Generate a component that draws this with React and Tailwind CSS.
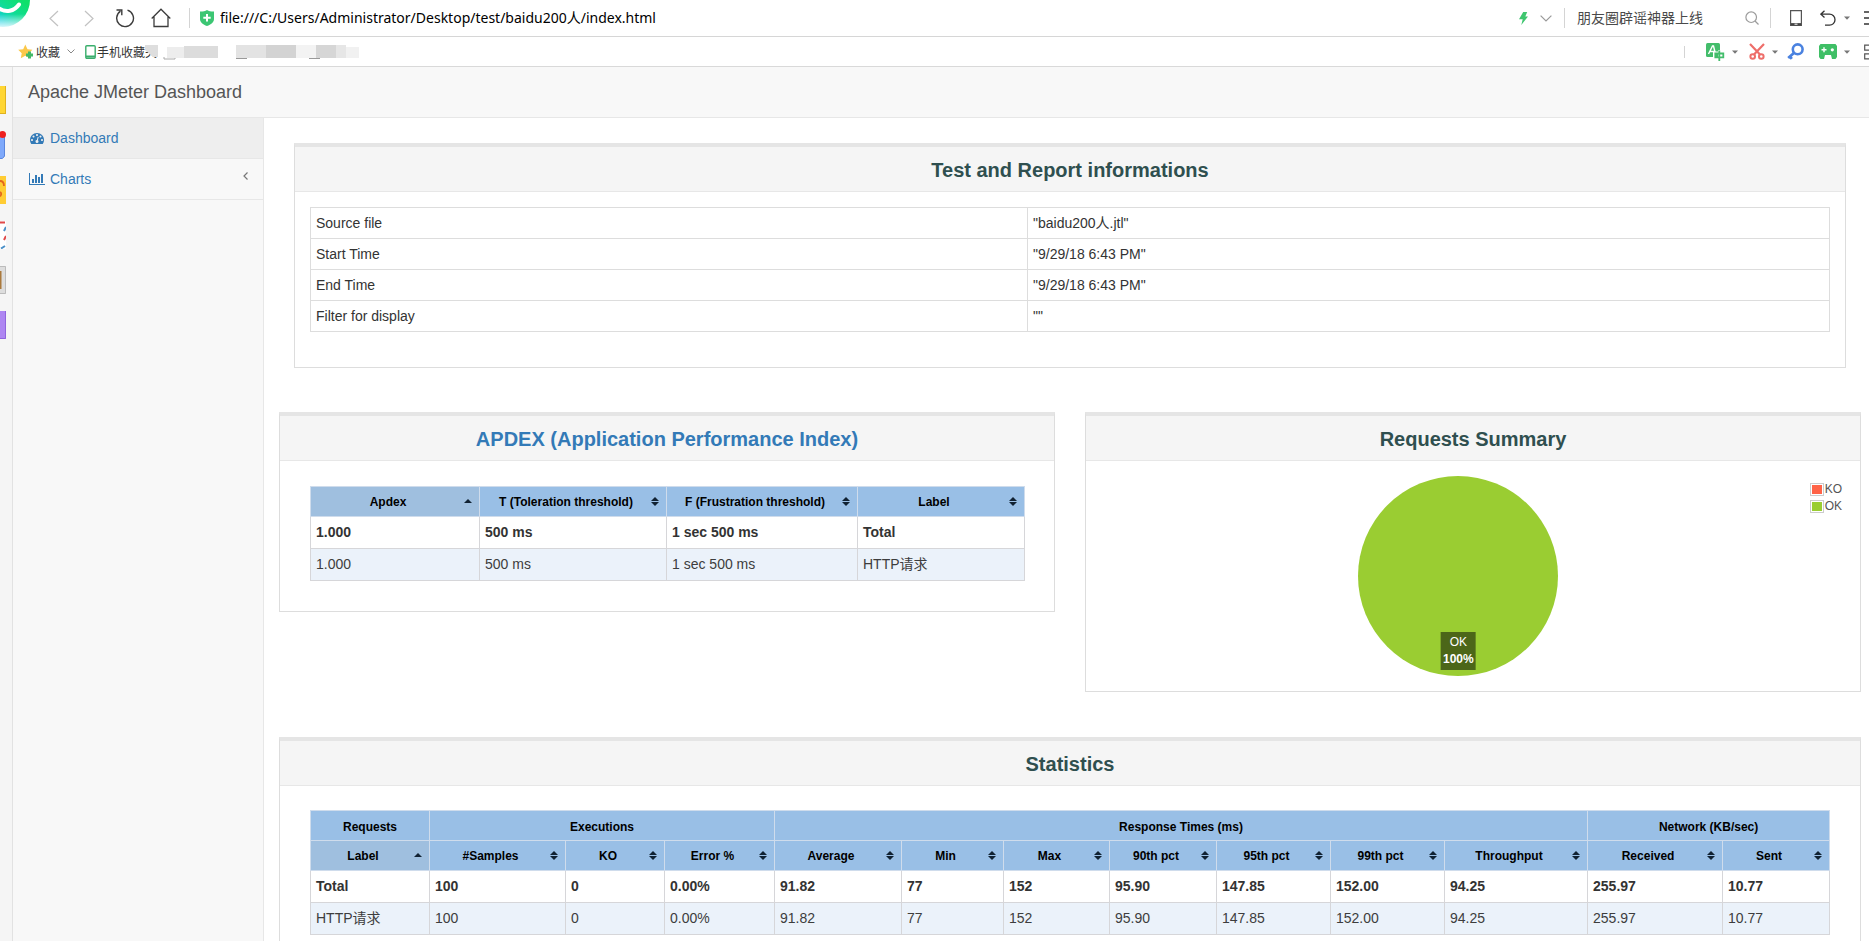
import React from "react";

const Svg = ({ className, viewBox, children }) => (
  <svg className={`block shrink-0 ${className}`} viewBox={viewBox} fill="none" aria-hidden="true">
    {children}
  </svg>
);

const Caret = ({ className = "" }) => (
  <Svg className={`h-[4px] w-[6px] ${className}`} viewBox="0 0 6 4">
    <path d="M0 .5h6L3 3.8z" fill="#777" />
  </Svg>
);

const Divider = ({ className = "" }) => <span className={`w-px shrink-0 bg-[#d4d4d4] ${className}`} />;

const IconButton = ({ label, className = "", children }) => (
  <button type="button" aria-label={label} className={`shrink-0 ${className}`}>
    {children}
  </button>
);

function AddressBar() {
  return (
    <div className="flex h-[37px] items-center overflow-hidden border-b border-[#d6d6d6] bg-white">
      <Svg className="h-[36px] w-[31px]" viewBox="0 0 31 36">
        <defs>
          <linearGradient id="logo" x1="0.5" y1="0.95" x2="0.85" y2="0.5">
            <stop offset="0" stopColor="#10cfe0" />
            <stop offset="0.5" stopColor="#10dc96" />
            <stop offset="1" stopColor="#0fe06a" />
          </linearGradient>
          <linearGradient id="fade" x1="0" y1="0" x2="0" y2="1">
            <stop offset="0" stopColor="#fff" stopOpacity="0" />
            <stop offset="1" stopColor="#fff" stopOpacity="0.9" />
          </linearGradient>
        </defs>
        <circle cx="3" cy="0" r="27" fill="url(#logo)" />
        <path d="M0 14h31v14H0z" fill="url(#fade)" />
        <path d="M-1 8.500c7 4.500 15 3 20-4" stroke="#fff" strokeWidth="4" strokeLinecap="round" />
      </Svg>
      <IconButton label="Back" className="ml-[18px]">
        <Svg className="h-[17px] w-[10px]" viewBox="0 0 10 17">
          <path d="M9 1 1 8.500l8 7.500" stroke="#c2c2c2" strokeWidth="1.200" />
        </Svg>
      </IconButton>
      <IconButton label="Forward" className="ml-[25px]">
        <Svg className="h-[17px] w-[10px]" viewBox="0 0 10 17">
          <path d="m1 1 8 7.500-8 7.500" stroke="#c2c2c2" strokeWidth="1.200" />
        </Svg>
      </IconButton>
      <IconButton label="Reload" className="ml-[21px]">
        <Svg className="h-[20px] w-[20px]" viewBox="0 0 20 20">
          <path d="M12.500 2.200A8.400 8.400 0 1 1 5.500 3.200M1.500 2h5.300v5.300" stroke="#3c3c3c" strokeWidth="1.400" />
        </Svg>
      </IconButton>
      <IconButton label="Home" className="ml-4">
        <Svg className="h-[20px] w-[20px]" viewBox="0 0 20 20">
          <path d="M.7 10.500 10 1.200l9.300 9.300M3 8.500v10h14v-10" stroke="#3c3c3c" strokeWidth="1.300" />
        </Svg>
      </IconButton>
      <Divider className="ml-[18px] h-5" />
      <Svg className="ml-[10px] h-[16px] w-[14px]" viewBox="0 0 14 16">
        <path d="M7 0c2 1.300 4.500 1.600 7 1.500V9c0 3.500-3 5.500-7 7-4-1.500-7-3.500-7-7V1.500C2.500 1.600 5 1.300 7 0z" fill="#3cc673" />
        <path d="M7 4v7.500M3.300 7.700h7.400" stroke="#fff" strokeWidth="2" />
      </Svg>
      <input
        aria-label="Address"
        className="ml-[6px] h-8 min-w-0 flex-1 bg-transparent pb-[2px] font-['Noto_Sans','Noto_Sans_CJK_SC',sans-serif] text-[14px] text-black outline-none"
        defaultValue="file:///C:/Users/Administrator/Desktop/test/baidu200人/index.html"
      />
      <IconButton label="Quick mode">
        <Svg className="h-[13px] w-[9px]" viewBox="0 0 9 13">
          <path d="M4.200 0h4L6.300 4.600H9L2.300 13l1.400-5.800H0z" fill="#3fc66f" />
        </Svg>
      </IconButton>
      <IconButton label="Address history" className="ml-3">
        <Svg className="h-[7px] w-[12px]" viewBox="0 0 12 7">
          <path d="m.6.6 5.400 5.400L11.400.6" stroke="#9a9a9a" strokeWidth="1.200" />
        </Svg>
      </IconButton>
      <Divider className="ml-3 h-5" />
      <input
        aria-label="Search"
        className="ml-3 h-8 w-[168px] shrink-0 bg-transparent pb-[2px] font-['Noto_Sans_CJK_SC',sans-serif] text-[14px] text-[#4a4a4a] outline-none"
        defaultValue="朋友圈辟谣神器上线"
      />
      <IconButton label="Search">
        <Svg className="h-[14px] w-[14px]" viewBox="0 0 14 14">
          <circle cx="6.200" cy="6.200" r="5.300" stroke="#9c9c9c" strokeWidth="1.200" />
          <path d="m10 10 3.500 3.500" stroke="#9c9c9c" strokeWidth="1.200" />
        </Svg>
      </IconButton>
      <Divider className="ml-[11px] h-5" />
      <IconButton label="Mobile view" className="ml-[19px]">
        <Svg className="h-[16px] w-[12px]" viewBox="0 0 12 16">
          <path d="M.6.6h10.800v14.800H.6z" stroke="#555" strokeWidth="1.200" />
          <path d="M1 14.200h10" stroke="#444" strokeWidth="2.200" />
          <path d="M4.500 14.200h3" stroke="#fff" />
        </Svg>
      </IconButton>
      <IconButton label="Undo close" className="ml-[18px]">
        <Svg className="h-[17px] w-[16px]" viewBox="0 0 16 17">
          <path d="M4.500.8.800 4.200l3.700 3.400M1 4.200h8.500a5.500 5.500 0 0 1 0 11H5" stroke="#333" strokeWidth="1.300" />
        </Svg>
      </IconButton>
      <Caret className="ml-2" />
      <IconButton label="Menu" className="-mr-[11px] ml-[14px]">
        <Svg className="h-[14px] w-[16px]" viewBox="0 0 16 14">
          <path d="M0 1h16M0 7h16M0 13h16" stroke="#333" strokeWidth="1.300" />
        </Svg>
      </IconButton>
    </div>
  );
}

function BookmarkBar() {
  return (
    <div className="flex h-[30px] items-center overflow-hidden border-b border-[#d9d9d9] bg-white pl-[18px] font-['Noto_Sans_CJK_SC',sans-serif] text-[12px] text-[#333]">
      <button type="button" className="flex items-center">
        <Svg className="h-[15px] w-[16px]" viewBox="0 0 16 15">
          <path d="m7.300.5 2.200 4.700 4.900.6-3.600 3.500.9 5-4.400-2.500-4.500 2.500.9-5L.2 5.800l5-.6z" fill="#fbc84a" />
          <path d="M11.500 7.500v7M8 11h7" stroke="#43b968" strokeWidth="3" />
        </Svg>
        <span className="ml-[2px]">收藏</span>
        <Svg className="ml-[7px] h-[5px] w-[8px]" viewBox="0 0 8 5">
          <path d="m.5.5 3.500 3.500L7.500.5" stroke="#888" />
        </Svg>
      </button>
      <button type="button" className="ml-[10px] flex items-center">
        <Svg className="h-[14px] w-[11px]" viewBox="0 0 11 14">
          <rect x=".8" y=".8" width="9.400" height="12.400" rx="1" stroke="#3aae6c" strokeWidth="1.400" />
          <path d="M1 11.500h9" stroke="#3aae6c" strokeWidth="2" />
        </Svg>
        <span className="ml-px">手机收藏夹</span>
      </button>
      <Svg className="-ml-[12px] h-[16px] w-[214px]" viewBox="0 0 214 16">
        <path d="M0 1h13v12H8L0 6z" fill="#dedede" />
        <path d="M19 13v2h11v-2" stroke="#aaa" />
        <path d="M22 3h17v11H22z" fill="#ededed" />
        <path d="M39 2h34v12H39z" fill="#dcdcdc" />
        <path d="M91 1h30v13H91z" fill="#e3e3e3" />
        <path d="M91 14.500h11" stroke="#999" />
        <path d="M121 1h30v13h-30z" fill="#d3d3d3" />
        <path d="M151 1h20v13h-20z" fill="#f3f3f3" />
        <path d="M171 1h20v13h-20z" fill="#d6d6d6" />
        <path d="M164 14.500h11" stroke="#999" />
        <path d="M191 1h10v13h-10z" fill="#e6e6e6" />
        <path d="M201 3h13v11h-13z" fill="#f1f1f1" />
      </Svg>
      <Divider className="mr-[21px] ml-auto h-3" />
      <IconButton label="Translate">
        <Svg className="h-[18px] w-[19px]" viewBox="0 0 19 18">
          <rect width="14" height="14" rx="1.500" fill="#43bd6b" />
          <path d="M2.500 11 6.500 3h1l2 8M4 8.500h5" stroke="#fff" strokeWidth="1.400" />
          <path d="M8 9.500h10.500v6.300H8zM13.200 7v11" stroke="#fff" strokeWidth="2" />
          <path d="M9.300 10.500h8v3.800h-8zM13.300 7.500V18" stroke="#43bd6b" strokeWidth="1.800" />
        </Svg>
      </IconButton>
      <Caret className="ml-[7px]" />
      <IconButton label="Screenshot" className="ml-[11px]">
        <Svg className="h-[17px] w-[16px]" viewBox="0 0 16 17">
          <path d="m1 1 10 10.500M15 1 5 11.500" stroke="#ee6e6a" strokeWidth="2.200" />
          <circle cx="3.700" cy="13.500" r="2.300" stroke="#ee6e6a" strokeWidth="2" />
          <circle cx="12.300" cy="13.500" r="2.300" stroke="#ee6e6a" strokeWidth="2" />
        </Svg>
      </IconButton>
      <Caret className="ml-[7px]" />
      <IconButton label="Find" className="ml-[9px]">
        <Svg className="h-[17px] w-[17px]" viewBox="0 0 17 17">
          <circle cx="10.700" cy="6.300" r="4.900" stroke="#4a82e0" strokeWidth="2.600" />
          <path d="m7.200 9.800-6 5.200M3 13.500l1.800 2.300" stroke="#4a82e0" strokeWidth="2.800" />
        </Svg>
      </IconButton>
      <IconButton label="Games" className="ml-[15px]">
        <Svg className="h-[15px] w-[18px]" viewBox="0 0 18 15">
          <path d="M1.500 0h15L18 2v11l-1.500 2H13l-1-4H6l-1 4H1.500L0 13V2z" fill="#3fbf66" />
          <path d="M5 3.300v5M2.500 5.800h5" stroke="#fff" strokeWidth="1.400" />
          <circle cx="13.300" cy="5.800" r="1.600" fill="#fff" />
        </Svg>
      </IconButton>
      <Caret className="ml-[7px]" />
      <IconButton label="All apps" className="-mr-[9px] ml-[14px]">
        <Svg className="h-[16px] w-[14px]" viewBox="0 0 14 16">
          <path d="M.7 1.200h5v5h-5zM.7 9.800h5v5h-5zM8.700 1.200h5v5h-5zM8.700 9.800h5v5h-5z" stroke="#555" strokeWidth="1.200" />
        </Svg>
      </IconButton>
    </div>
  );
}

function Rail() {
  return (
    <div className="flex w-[13px] shrink-0 flex-col gap-[17px] border-r border-[#e2e2e2] bg-[#f5f5f5] pt-[19px]">
      <Svg className="h-7 w-[6px]" viewBox="0 0 6 28">
        <path d="M0 0h6v28H0z" fill="#ffd633" />
        <path d="M5.500 0v28M0 27.500h6" stroke="#e0b21e" />
      </Svg>
      <Svg className="h-7 w-[6px]" viewBox="0 0 6 28">
        <path d="M0 3h5v22l-2 2H0z" fill="#7fa9fb" />
        <path d="M4.500 6v19l-2 2.500H0" stroke="#5b86dd" />
        <circle cx="2.500" cy="3.500" r="3.500" fill="#ee2020" />
      </Svg>
      <Svg className="h-7 w-[6px]" viewBox="0 0 6 28">
        <path d="M0 0h6v28H0z" fill="#ffcc33" />
        <path d="M0 5c3 0 4 2 4 5M0 16c2 1 1 4 0 4" stroke="#e3661c" strokeWidth="1.800" />
      </Svg>
      <Svg className="h-7 w-[6px]" viewBox="0 0 6 28">
        <path d="M0 0h6v28H0z" fill="#fff" />
        <path d="M0 1.500h5M6 15l-2 4" stroke="#e04848" strokeWidth="2" />
        <path d="m6 6-2 4M5 25l-4 2.500" stroke="#4a90c8" strokeWidth="2" />
      </Svg>
      <Svg className="h-7 w-[6px]" viewBox="0 0 6 28">
        <path d="M0 0h6v28H0z" fill="#ddd" />
        <path d="M0 5h1.500v18H0z" fill="#a9793c" />
        <path d="M0 .5h5.500v27H0" stroke="#bbb" />
      </Svg>
      <Svg className="h-7 w-[6px]" viewBox="0 0 6 28">
        <path d="M0 0h6v28H0z" fill="#ae86f2" />
        <path d="M5.500 0v27.500H0" stroke="#9065dd" />
      </Svg>
    </div>
  );
}

const DashboardIcon = () => (
  <Svg className="h-[14px] w-[14px]" viewBox="0 0 1792 1792">
    <path
      fill="currentColor"
      d="M384 1152q0-53-37.500-90.500t-90.500-37.500-90.500 37.500-37.500 90.500 37.500 90.500 90.500 37.500 90.500-37.500 37.500-90.500zm192-448q0-53-37.500-90.500t-90.500-37.500-90.500 37.500-37.500 90.500 37.500 90.500 90.500 37.500 90.500-37.500 37.500-90.500zm428 481l101-382q6-26-7.500-48.500t-38.500-29.500-48 6.500-30 39.500l-101 382q-60 5-107 43.500t-63 98.500q-20 77 20 146t117 89 146-20 89-117q16-60-6-117t-72-91zm660-33q0-53-37.500-90.500t-90.500-37.500-90.500 37.500-37.500 90.500 37.500 90.500 90.500 37.500 90.500-37.500 37.500-90.500zm-640-640q0-53-37.500-90.500t-90.500-37.500-90.500 37.500-37.500 90.500 37.500 90.500 90.500 37.500 90.500-37.500 37.500-90.500zm448 192q0-53-37.500-90.500t-90.500-37.500-90.500 37.500-37.500 90.500 37.500 90.500 90.500 37.500 90.500-37.500 37.500-90.500zm320 448q0 261-141 483-19 29-54 29h-1402q-35 0-54-29-141-221-141-483 0-182 71-348t191-286 286-191 348-71 348 71 286 191 191 286 71 348z"
    />
  </Svg>
);

const ChartIcon = () => (
  <Svg className="h-[14px] w-[16px]" viewBox="0 0 2048 1792">
    <path
      fill="currentColor"
      d="M640 896v512h-256v-512h256zm384-512v1024h-256v-1024h256zm1024 1152v128h-2048v-1536h128v1408h1920zm-640-896v768h-256v-768h256zm384-384v1152h-256v-1152h256z"
    />
  </Svg>
);

function Sidebar() {
  return (
    <nav className="w-[251px] shrink-0 border-r border-[#e7e7e7] bg-[#f8f8f8]">
      <a href="#dashboard" className="flex h-[41px] items-center gap-[6px] border-b border-[#e7e7e7] bg-[#eee] pl-[17px] text-[#337ab7]">
        <DashboardIcon />
        Dashboard
      </a>
      <a href="#charts" className="flex h-[41px] items-center gap-[5px] border-b border-[#e7e7e7] pr-[15px] pl-4 text-[#337ab7]">
        <ChartIcon />
        Charts
        <Svg className="mb-[6px] ml-auto h-[8px] w-[5px]" viewBox="0 0 5 8">
          <path d="M4.500.5 1 4l3.500 3.500" stroke="#777" strokeWidth="1.200" />
        </Svg>
      </a>
    </nav>
  );
}

function Panel({ title, link, className = "", bodyClass = "", children }) {
  return (
    <section className={`border border-t-4 border-[#ddd] border-t-[#e5e5e5] bg-white ${className}`}>
      <h2 className="flex h-[45px] items-center justify-center border-b border-[#e7e7e7] bg-[#f5f5f5] pt-[2px] text-[20px] leading-5 font-bold text-[#2f4f4f]">
        {link ? (
          <a href={link} className="text-[#337ab7]">
            {title}
          </a>
        ) : (
          title
        )}
      </h2>
      <div className={bodyClass}>{children}</div>
    </section>
  );
}

function SortHeader({ label, ascending }) {
  return (
    <th
      scope="col"
      aria-sort={ascending ? "ascending" : "none"}
      className={`h-[30px] border border-[#cfdcec] p-0 ${ascending ? "bg-[#9fbfdf]" : "bg-[#99bfe6]"}`}
    >
      <button type="button" className="flex w-full items-center pt-px pr-[7px] pl-px font-bold">
        <span className="flex-1 text-center whitespace-nowrap">{label}</span>
        <Svg className="mb-[2px] h-[9px] w-[8px]" viewBox="0 0 8 9">
          {ascending ? <path d="M0 6h8L4 2z" fill="#123" /> : <path d="M0 4h8L4 0zM0 5h8L4 9z" fill="#123" />}
        </Svg>
      </button>
    </th>
  );
}

function DataTable({ columns, groups, rows }) {
  return (
    <table className="w-full table-fixed border-collapse">
      <colgroup>
        {columns.map((c) => (
          <col key={c.label} className={c.width} />
        ))}
      </colgroup>
      <thead className="text-[12px] leading-4 text-black">
        {groups && (
          <tr>
            {groups.map((g) => (
              <th
                key={g.label}
                scope="colgroup"
                colSpan={g.span}
                className="h-[30px] border border-[#cfdcec] bg-[#99bfe6] px-1 pt-[2px] pb-0 text-center font-bold"
              >
                {g.label}
              </th>
            ))}
          </tr>
        )}
        <tr>
          {columns.map((c, i) => (
            <SortHeader key={c.label} label={c.label} ascending={i === 0} />
          ))}
        </tr>
      </thead>
      <tbody>
        {rows.map((row, r) => (
          <tr key={row.join("|")} className={r === 0 ? "bg-white font-bold text-[#333]" : "bg-[#ebf2fa] text-[#3d3d3d]"}>
            {row.map((cell, i) => (
              <td key={columns[i].label} className="h-8 border border-[#d6d6d9] px-[5px] pt-0 pb-px leading-5">
                {cell}
              </td>
            ))}
          </tr>
        ))}
      </tbody>
    </table>
  );
}

const info = [
  ["Source file", '"baidu200人.jtl"'],
  ["Start Time", '"9/29/18 6:43 PM"'],
  ["End Time", '"9/29/18 6:43 PM"'],
  ["Filter for display", '""'],
];

const apdexColumns = [
  { label: "Apdex", width: "w-[169px]" },
  { label: "T (Toleration threshold)", width: "w-[187px]" },
  { label: "F (Frustration threshold)", width: "w-[191px]" },
  { label: "Label", width: "w-[167px]" },
];

const apdexRows = [
  ["1.000", "500 ms", "1 sec 500 ms", "Total"],
  ["1.000", "500 ms", "1 sec 500 ms", "HTTP请求"],
];

const statGroups = [
  { label: "Requests", span: 1 },
  { label: "Executions", span: 3 },
  { label: "Response Times (ms)", span: 7 },
  { label: "Network (KB/sec)", span: 2 },
];

const statColumns = [
  { label: "Label", width: "w-[119px]" },
  { label: "#Samples", width: "w-[136px]" },
  { label: "KO", width: "w-[99px]" },
  { label: "Error %", width: "w-[110px]" },
  { label: "Average", width: "w-[127px]" },
  { label: "Min", width: "w-[102px]" },
  { label: "Max", width: "w-[106px]" },
  { label: "90th pct", width: "w-[107px]" },
  { label: "95th pct", width: "w-[114px]" },
  { label: "99th pct", width: "w-[114px]" },
  { label: "Throughput", width: "w-[143px]" },
  { label: "Received", width: "w-[135px]" },
  { label: "Sent", width: "w-[107px]" },
];

const statValues = ["100", "0", "0.00%", "91.82", "77", "152", "95.90", "147.85", "152.00", "94.25", "255.97", "10.77"];
const statRows = [
  ["Total", ...statValues],
  ["HTTP请求", ...statValues],
];

function RequestsChart() {
  return (
    <div className="flex">
      <div className="flex flex-1 justify-center">
        <div className="relative">
          <Svg className="h-[200px] w-[200px]" viewBox="0 0 200 200">
            <circle cx="100" cy="100" r="100" fill="#9acd32" />
          </Svg>
          <div className="absolute bottom-[6px] left-1/2 -translate-x-1/2 bg-[#4c6619] p-[2px] text-center text-[12px] leading-[17px] text-white">
            OK
            <br />
            <b>100%</b>
          </div>
        </div>
      </div>
      <ul className="mt-[5px] text-[12px] leading-[17px] text-[#545454]">
        <li className="flex items-center">
          <span className="mr-px h-[13px] w-[14px] border border-[#ccc] bg-[#ff6347] bg-clip-content p-px" />
          KO
        </li>
        <li className="flex items-center">
          <span className="mr-px h-[13px] w-[14px] border border-[#ccc] bg-[#9acd32] bg-clip-content p-px" />
          OK
        </li>
      </ul>
    </div>
  );
}

export default function App() {
  return (
    <div className="flex h-screen flex-col overflow-hidden bg-white font-['Liberation_Sans','Noto_Sans_CJK_SC',sans-serif] text-[14px] leading-5 text-[#333]">
      <header className="shrink-0">
        <AddressBar />
        <BookmarkBar />
      </header>
      <div className="flex min-h-0 flex-1">
        <Rail />
        <div className="flex min-w-0 flex-1 flex-col">
          <div className="flex h-[51px] shrink-0 items-center border-b border-[#e7e7e7] bg-[#f8f8f8] pl-[15px]">
            <a href="#top" className="text-[18px] text-[#555]">
              Apache JMeter Dashboard
            </a>
          </div>
          <div className="flex min-h-0 flex-1">
            <Sidebar />
            <main className="min-w-0 flex-1 overflow-hidden pt-[25px] pr-2 pl-[15px]">
              <Panel title="Test and Report informations" className="mx-[15px]" bodyClass="px-[15px] pt-[15px] pb-[35px]">
                <table className="w-full table-fixed border-collapse">
                  <colgroup>
                    <col className="w-[717px]" />
                    <col className="w-[802px]" />
                  </colgroup>
                  <tbody>
                    {info.map(([name, value]) => (
                      <tr key={name}>
                        <th scope="row" className="h-[31px] border border-[#ddd] px-[5px] py-0 text-left font-normal">
                          {name}
                        </th>
                        <td className="h-[31px] border border-[#ddd] px-[5px] py-0">{value}</td>
                      </tr>
                    ))}
                  </tbody>
                </table>
              </Panel>
              <div className="mt-[44px] grid grid-cols-2 items-start gap-[30px]">
                <Panel title="APDEX (Application Performance Index)" link="#apdex" bodyClass="px-[30px] pt-[25px] pb-[30px]">
                  <DataTable columns={apdexColumns} rows={apdexRows} />
                </Panel>
                <Panel title="Requests Summary" bodyClass="py-[15px] pr-[18px] pl-[21px]">
                  <RequestsChart />
                </Panel>
              </div>
              <Panel title="Statistics" className="mt-[45px]" bodyClass="px-[30px] pt-[24px] pb-[30px]">
                <DataTable columns={statColumns} groups={statGroups} rows={statRows} />
              </Panel>
            </main>
          </div>
        </div>
      </div>
    </div>
  );
}
